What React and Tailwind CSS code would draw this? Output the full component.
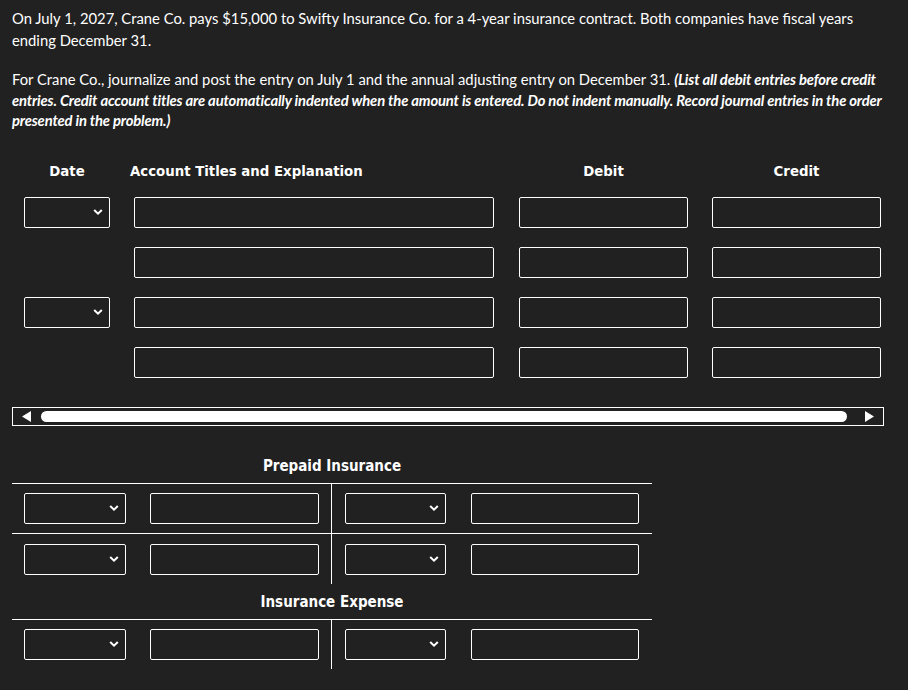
import React from 'react';

const headFont = "font-['DejaVu_Sans_Condensed','DejaVu_Sans',sans-serif] font-bold";

const Chevron = () => (
  <svg width="10" height="7" viewBox="0 0 10 7" className="absolute right-[6px] top-1/2 -translate-y-1/2">
    <path d="M1.2 1.5L5 5.2L8.8 1.5" fill="none" stroke="white" strokeWidth="2" />
  </svg>
);

const SelectBox = ({ width }) => (
  <div className={`relative h-[31px] ${width} rounded-[2px] border border-white bg-transparent`}>
    <Chevron />
  </div>
);

const Field = ({ width }) => (
  <input type="text" className={`h-[31px] ${width} rounded-[2px] border border-white bg-transparent outline-none`} />
);

const JournalRow = ({ withDate }) => (
  <div className="flex items-center">
    <div className="ml-[12px] w-[86px]">{withDate && <SelectBox width="w-[86px]" />}</div>
    <div className="ml-[24px]"><Field width="w-[360px]" /></div>
    <div className="ml-[25px]"><Field width="w-[169px]" /></div>
    <div className="ml-[24px]"><Field width="w-[169px]" /></div>
  </div>
);

const TRow = ({ first }) => {
  const pad = first ? 'pt-[9px] pb-[9px]' : 'pt-[10px] pb-[9px]';
  return (
    <div className="flex">
      <div className={`flex w-[320px] items-center border-r border-white pl-[12px] ${pad}`}>
        <SelectBox width="w-[102px]" />
        <div className="ml-[24px]"><Field width="w-[169px]" /></div>
      </div>
      <div className={`flex items-center pl-[13px] ${pad}`}>
        <SelectBox width="w-[101px]" />
        <div className="ml-[25px]"><Field width="w-[168px]" /></div>
      </div>
    </div>
  );
};

const TAccount = ({ title, rows }) => (
  <div className="w-[640px]">
    <div className={`${headFont} h-[20px] text-center text-[15px] leading-[20px] text-white`}>{title}</div>
    <div className="mt-[7px] border-t border-white">
      {Array.from({ length: rows }).map((_, i) => (
        <div key={i} className={i > 0 ? 'border-t border-white' : ''}>
          <TRow first={i === 0} />
        </div>
      ))}
    </div>
  </div>
);

export default function App() {
  return (
    <div className="min-h-screen w-full bg-[#212121] px-[12px] pt-[7px] pb-[20px] text-white font-['Lato',sans-serif]">
      <p className="text-[14.8px] leading-[22px]">
        On July 1, 2027, Crane Co. pays $15,000 to Swifty Insurance Co. for a 4-year insurance contract. Both companies have fiscal years ending December 31.
      </p>
      <p className="mt-[18px] text-[14.8px] leading-[20.5px]">
        For Crane Co., journalize and post the entry on July 1 and the annual adjusting entry on December 31.{' '}
        <span className="font-bold italic tracking-[-0.16px]">
          (List all debit entries before credit entries. Credit account titles are automatically indented when the amount is entered. Do not indent manually. Record journal entries in the order presented in the problem.)
        </span>
      </p>

      {/* journal table */}
      <div className={`${headFont} mt-[30px] flex h-[20px] items-center text-[14.8px] leading-[20px]`}>
        <div className="ml-[12px] w-[86px] text-center">Date</div>
        <div className="ml-[20px] w-[364px]">Account Titles and Explanation</div>
        <div className="ml-[25px] w-[169px] text-center">Debit</div>
        <div className="ml-[24px] w-[169px] text-center">Credit</div>
      </div>
      <div className="mt-[16px] flex flex-col gap-[19px]">
        <JournalRow withDate />
        <JournalRow />
        <JournalRow withDate />
        <JournalRow />
      </div>

      {/* horizontal scroller */}
      <div className="mt-[29px] flex h-[19px] w-[872px] items-center border border-white px-[9px]">
        <svg width="9" height="11" viewBox="0 0 9 11"><path d="M9 0V11L0 5.5Z" fill="white" /></svg>
        <div className="ml-[10px] h-[11px] w-[806px] rounded-full bg-white" />
        <svg width="9" height="11" viewBox="0 0 9 11" className="ml-[18px]"><path d="M0 0V11L9 5.5Z" fill="white" /></svg>
      </div>

      <div className="mt-[30px]">
        <TAccount title="Prepaid Insurance" rows={2} />
      </div>
      <div className="mt-[8px]">
        <TAccount title="Insurance Expense" rows={1} />
      </div>
    </div>
  );
}
